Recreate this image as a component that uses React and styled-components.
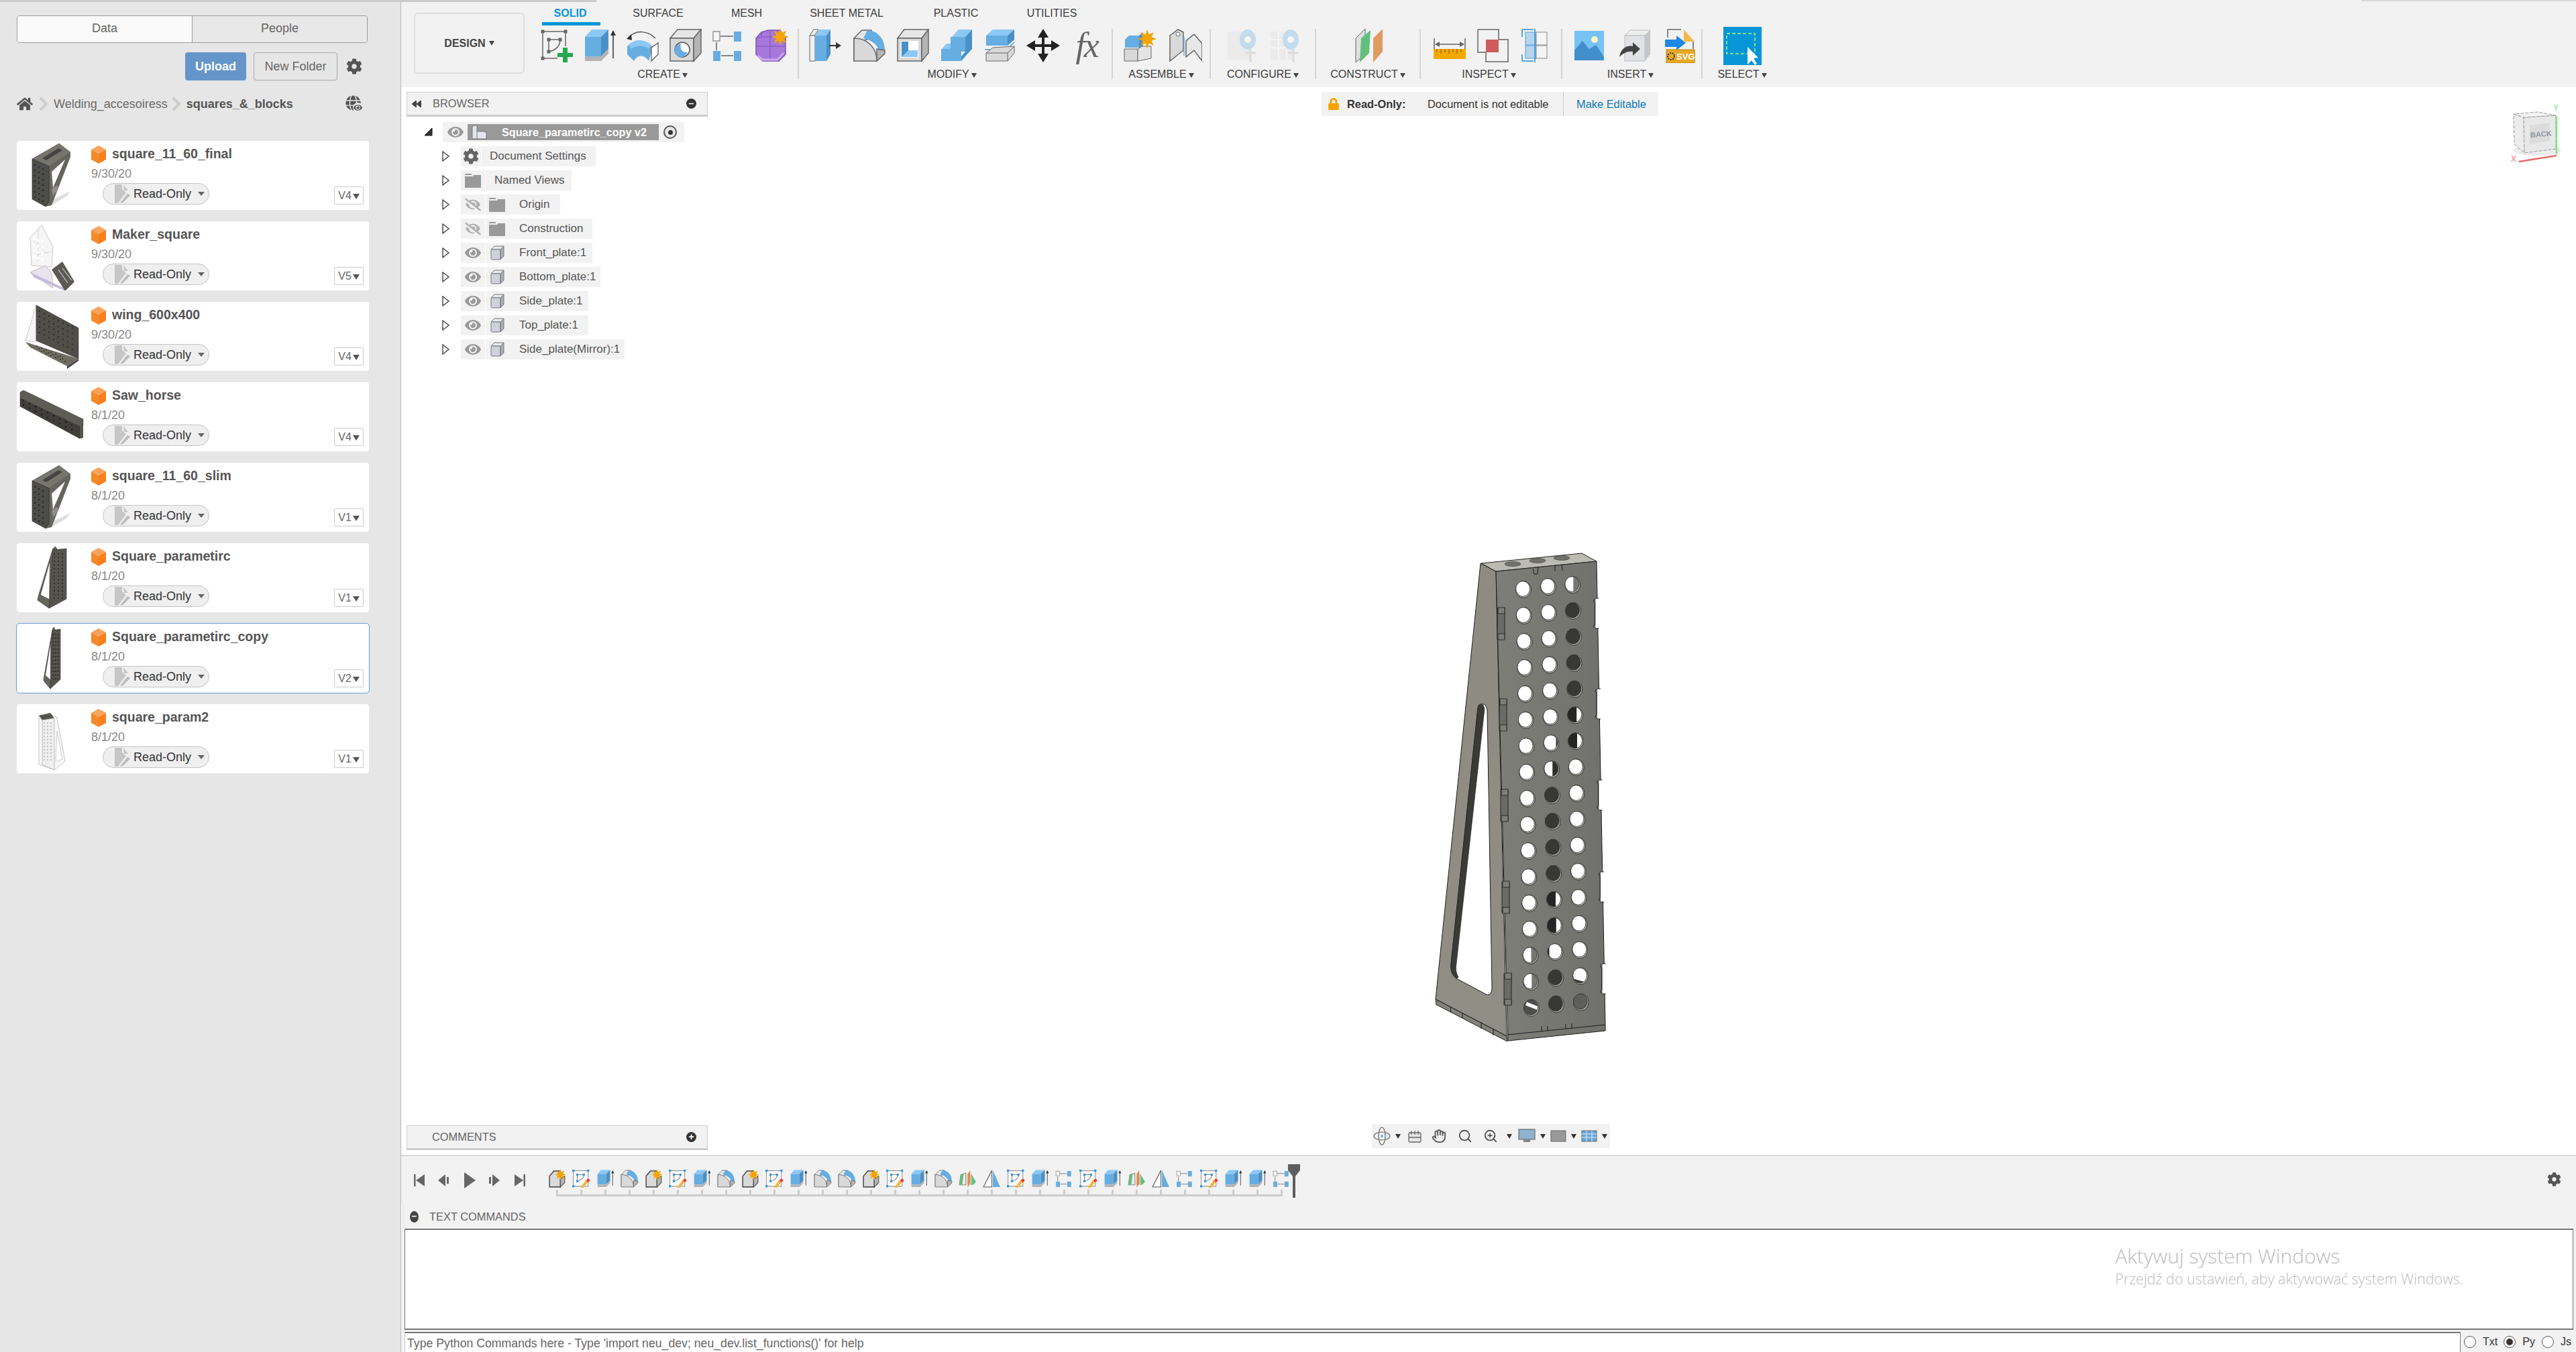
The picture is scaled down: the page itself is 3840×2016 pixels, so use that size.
import React from 'react';
import styled, { createGlobalStyle } from 'styled-components';
import { FaCog, FaHome, FaGlobe, FaEye, FaEyeSlash, FaLock, FaBackward } from 'react-icons/fa';
import { Hand, Search, ZoomIn } from 'lucide-react';

const Global = createGlobalStyle`
  html, body { margin: 0; padding: 0; background: #fff; }
  body { font-family: "Liberation Sans", Arial, sans-serif; font-size: 16px; color: #555; }
  * { box-sizing: border-box; }
`;

const Root = styled.div`position: relative; display: flex; width: 3840px; height: 2016px; overflow: hidden;`;
const TopStrip = styled.div`position: absolute; left: 0; top: 0; width: 889px; height: 3px; background: #cbcbcb; z-index: 3;`;
const TopStripRight = styled.div`position: absolute; right: 0; top: 0; width: 320px; height: 2px; background: #d8d8d8; z-index: 3;`;

/* ---------- Sidebar ---------- */
const Sidebar = styled.aside`
  width: 598px; flex: none; background: #e6e6e6; border-right: 1px solid #b9b9b9;
  padding: 23px 0 0 25px; display: flex; flex-direction: column;
`;
const Tabs = styled.div`display: flex; width: 523px; height: 41px; border: 1px solid #9c9c9c; border-radius: 4px; overflow: hidden;`;
const Tab = styled.div`
  flex: 1; display: flex; align-items: center; justify-content: center; font-size: 18px; color: #666; padding-bottom: 3px;
  background: ${p => (p.$on ? '#fafafa' : '#e8e8e8')};
  border-right: ${p => (p.$on ? '1px solid #9c9c9c' : 'none')};
`;
const Actions = styled.div`display: flex; align-items: center; width: 523px; height: 42px; margin-top: 14px; justify-content: flex-end;`;
const Upload = styled.div`
  width: 91px; height: 42px; border-radius: 4px; background: #6595c9; color: #fff; font-weight: 700; font-size: 18px;
  display: flex; align-items: center; justify-content: center;
`;
const NewFolder = styled.div`
  width: 125px; height: 42px; margin-left: 11px; border: 1px solid #a8a8a8; border-radius: 4px; color: #666; font-size: 18px;
  display: flex; align-items: center; justify-content: center;
`;
const GearWrap = styled.div`width: 45px; display: flex; justify-content: flex-end; padding-right: 8px; color: #555; font-size: 24px; line-height: 0;`;
const Crumbs = styled.div`position: relative; display: flex; align-items: center; height: 30px; margin-top: 20px; font-size: 18px; color: #666;`;
const Crumb = styled.span`font-weight: ${p => (p.$b ? 700 : 400)}; color: ${p => (p.$b ? '#555' : '#6b6b6b')};`;
const Chevron = styled.svg`margin: 0 8px 0 ${p => p.$l || 9}px; flex: none;`;
const HomeWrap = styled.span`color: #555; line-height: 0; font-size: 24px;`;
const GlobeWrap = styled.span`position: relative; width: 24px; height: 26px; margin-left: auto; margin-right: 58px; color: #555; font-size: 23px; line-height: 0;`;
const GlobeEye = styled.span`position: absolute; right: -2px; bottom: 0; color: #555; font-size: 13px; background: #e6e6e6; border-radius: 50%; padding: 1px;`;
const Cards = styled.div`display: flex; flex-direction: column; gap: 17px; margin-top: 40px;`;
const Card = styled.div`
  position: relative; width: 525px; height: 103px; background: #fff; border-radius: 4px; display: flex;
  outline: ${p => (p.$sel ? '1px solid #6b9bd2' : 'none')};
`;
const ThumbBox = styled.div`width: 111px; flex: none; line-height: 0;`;
const CardBody = styled.div`flex: 1; display: flex; flex-direction: column; padding: 8px 8px 9px 0;`;
const TitleRow = styled.div`display: flex; align-items: center; height: 24px; gap: 9px;`;
const Title = styled.div`font-weight: 700; font-size: 19.5px; color: #555; white-space: nowrap; margin-bottom: 1px;`;
const DateText = styled.div`font-size: 18px; color: #8a8a8a; height: 30px; line-height: 30px; margin-top: 2px;`;
const CardFoot = styled.div`display: flex; justify-content: space-between; align-items: flex-end; flex: 1;`;
const Pill = styled.div`
  margin-left: 17px; width: 159px; height: 32px; border: 1px solid #c4c4c4; border-radius: 16px; background: #efefef;
  display: flex; align-items: center; padding-left: 17px; color: #333; font-size: 18px; margin-top: -1px;
`;
const PillText = styled.span`margin-left: 2px;`;
const PillCaret = styled.span`margin-left: 10px; width: 0; height: 0; border: 5px solid transparent; border-top: 6px solid #666; border-bottom: 0;`;
const Version = styled.div`
  width: 44px; height: 27px; border: 1px solid #ccc; border-radius: 2px; margin-bottom: 0; color: #666; font-size: 16px;
  display: flex; align-items: center; justify-content: center; gap: 2px; background: #fff;
`;
const VerCaret = styled.span`width: 0; height: 0; border: 5px solid transparent; border-top: 8px solid #555; border-bottom: 0; margin-top: 2px;`;

/* ---------- Main ---------- */
const Main = styled.main`flex: 1; min-width: 0; display: flex; flex-direction: column;`;
const Toolbar = styled.div`height: 130px; flex: none; background: #f2f2f2; display: flex; padding-left: 19px; padding-top: 19px;`;
const DesignBtn = styled.div`
  width: 165px; height: 91px; border: 2px solid #dedede; border-radius: 6px; display: flex; align-items: center; justify-content: center;
  font-size: 16px; font-weight: 700; color: #444; gap: 5px; flex: none;
`;
const Caret = styled.span`
  display: inline-block; width: 0; height: 0; border-left: 4px solid transparent; border-right: 4px solid transparent;
  border-top: 7px solid #444; margin-left: ${p => p.$m ?? 3}px;
`;
const RibbonCol = styled.div`display: flex; flex-direction: column; margin-left: 16px; margin-top: -19px;`;
const TabRow = styled.div`position: relative; height: 43px; width: 1000px; flex: none;`;
const TabLabel = styled.div`
  position: absolute; top: 11px; left: ${p => p.$x}px; transform: translateX(-50%); font-size: 16px; white-space: nowrap;
  color: ${p => (p.$on ? '#0696d7' : '#3c3c3c')}; font-weight: ${p => (p.$on ? 700 : 400)};
`;
const TabLine = styled.div`position: absolute; left: 10px; top: 33px; width: 87px; height: 5px; background: #0696d7;`;
const Ribbon = styled.div`display: flex; height: 75px;`;
const Group = styled.div`
  width: ${p => p.$w}px; flex: none; display: flex; flex-direction: column; border-right: ${p => (p.$last ? 'none' : '2px solid #d4d4d4')};
`;
const IconRow = styled.div`display: flex; height: 50px; padding-left: ${p => p.$pl || 0}px; align-items: center;`;
const IconCell = styled.div`width: ${p => p.$c}px; display: flex; justify-content: center; align-items: center; flex: none; opacity: ${p => (p.$dim ? 0.3 : 1)};`;
const GroupLabel = styled.div`
  margin-top: 9px; height: 18px; line-height: 18px; text-align: center; font-size: 16px; color: #3c3c3c; white-space: nowrap;
  padding-right: ${p => p.$pr || 0}px;
`;

const Viewport = styled.div`position: relative; flex: 1; background: #fff;`;
const Overlay = styled.div`position: absolute; left: ${p => p.$l}px; top: ${p => p.$t}px;`;
const Panel = styled.div`
  width: 449px; height: 37px; background: #f2f2f2; border: 1px solid #d0d0d0; border-bottom: 3px solid #ccc;
  display: flex; align-items: center; font-size: 16.4px; color: #666; padding-left: ${p => p.$pl || 7}px; padding-right: 16px;
`;
const PanelTitle = styled.span`margin-left: ${p => p.$m || 0}px;`;
const RoundBtn = styled.span`
  margin-left: auto; width: 15px; height: 15px; border-radius: 50%; background: #333; color: #fff; font-size: 14px; font-weight: 700;
  line-height: 14px; text-align: center; flex: none;
`;
const RoundBtnLeft = styled(RoundBtn)`margin-left: 0; background: #444; width: 13px; height: 17px;`;
const Tree = styled.div`display: flex; flex-direction: column; gap: 6px; margin-top: 8px;`;
const TreeRow = styled.div`display: flex; align-items: center; height: 30px; margin-left: ${p => p.$ml ?? 53}px;`;
const ArrowCell = styled.span`width: ${p => p.$w || 28}px; flex: none; line-height: 0; display: flex;`;
const RowPill = styled.div`display: flex; align-items: center; height: 30px; width: ${p => p.$w}px; background: #f2f2f2; font-size: 17px; color: #555; white-space: nowrap;`;
const RowIcon = styled.span`
  width: ${p => p.$w}px; height: 30px; flex: none; display: flex; align-items: center; justify-content: center; line-height: 0;
  border-right: ${p => (p.$sep ? '1px solid #fff' : 'none')}; color: ${p => (p.$c || '#999')}; font-size: 24px;
`;
const RowLabel = styled.span`margin-left: ${p => p.$m}px;`;
const RootHL = styled.div`
  display: flex; align-items: center; width: 285px; height: 24px; background: #999; color: #fff; font-weight: 700; font-size: 16.2px; padding-left: 5px;
`;
const RootLabel = styled.span`margin-left: 22px; white-space: nowrap;`;
const RootRadio = styled.span`
  width: 20px; height: 20px; border-radius: 50%; border: 2px solid #555; background: #e8e8e8; margin-left: 7px; display: flex; align-items: center; justify-content: center;
  &::after { content: ''; width: 7px; height: 7px; border-radius: 50%; background: #333; }
`;
const Banner = styled.div`
  position: absolute; left: 1372px; top: 7px; width: 502px; height: 36px; background: #f2f2f2; display: flex; align-items: center;
  font-size: 16.4px; color: #333; padding-left: 9px;
`;
const BannerLock = styled.span`color: #f5a300; font-size: 18px; line-height: 0; width: 29px;`;
const BannerB = styled.b`width: 120px; font-size: 16.4px;`;
const BannerT = styled.span`width: 202px; white-space: nowrap;`;
const BannerLink = styled.span`border-left: 1px solid #ccc; height: 36px; line-height: 36px; padding-left: 19px; color: #0a78bd;`;
const CubeBox = styled.div`position: absolute; right: 20px; top: 20px; line-height: 0;`;
const ModelBox = styled.div`position: absolute; left: 1532px; top: 685px; line-height: 0;`;
const NavBar = styled.div`
  position: absolute; left: 1447px; top: 1546px; width: 355px; height: 36px; background: #f2f2f2; display: flex; align-items: center; padding-left: 0;
`;
const NavItem = styled.span`width: ${p => p.$w}px; flex: none; display: flex; justify-content: center; align-items: center; color: #555; line-height: 0;`;
const NavCaret = styled.span`width: ${p => p.$w || 16}px; flex: none; display: flex; justify-content: center;
  &::after { content: ''; width: 0; height: 0; border-left: 4px solid transparent; border-right: 4px solid transparent; border-top: 7px solid #333; }
`;

/* ---------- Timeline ---------- */
const Timeline = styled.div`
  position: relative; height: 74px; flex: none; background: #f2f2f2; border-top: 2px solid #dcdcdc; display: flex; padding-top: 20px;
`;
const Controls = styled.div`display: flex; width: 214px; padding-left: 8px; height: 32px; align-items: center; flex: none;`;
const Ctrl = styled.span`width: 37.5px; display: flex; justify-content: center; line-height: 0;`;
const Track = styled.div`
  position: relative; display: flex; height: 40px;
  &::after { content: ''; position: absolute; left: 17px; right: 17px; bottom: 0; height: 3px; background: #ccc; }
`;
const Step = styled.div`width: 36.03px; display: flex; flex-direction: column; align-items: center; flex: none; line-height: 0;`;
const Tick = styled.span`width: 3px; height: 9px; background: #ccc; margin-top: 3px;`;
const Playhead = styled.div`position: absolute; left: 1322px; top: 12px; line-height: 0;`;
const TLGear = styled.div`position: absolute; right: 22px; top: 24px; color: #555; font-size: 21px; line-height: 0;`;
const CmdHead = styled.div`
  height: 36px; flex: none; background: #f2f2f2; display: flex; align-items: center; padding-left: 10px; font-size: 16.4px; color: #666;
  border-left: 1px solid #ddd; margin-left: 2px; gap: 16px;
`;
const ConsoleWrap = styled.div`background: #f2f2f2; flex: none; height: 154px;`;
const Console = styled.div`
  position: relative; height: 151px; margin-left: 5px; margin-right: 4px; background: #fff; border: 1px solid #777; border-width: 2px 1px;
`;
const Watermark = styled.div`
  position: absolute; left: 2549px; top: ${p => p.$t}px; font-family: "Open Sans", "Noto Sans", sans-serif; font-weight: 300; white-space: nowrap;
  font-size: ${p => p.$s}px; color: #bcbcbc;
`;
const InputRow = styled.div`height: 30px; flex: none; display: flex; background: #f2f2f2;`;
const PyInput = styled.div`
  margin-left: 5px; width: 3065px; background: #fff; border-top: 2px solid #777; border-left: 1px solid #ccc; border-right: 1px solid #777;
  font-size: 17.7px; color: #666; padding: 5px 0 0 3px; white-space: nowrap;
`;
const Radios = styled.div`display: flex; align-items: center; flex: 1; padding-left: 2px; font-size: 16px; color: #333;`;
const Radio = styled.span`
  width: 18px; height: 18px; border-radius: 50%; border: 1px solid #555; background: #fff; flex: none; margin-left: ${p => p.$m || 0}px;
  display: flex; align-items: center; justify-content: center;
  &::after { content: ''; width: 10px; height: 10px; border-radius: 50%; background: ${p => (p.$on ? '#333' : 'transparent')}; }
`;
const RadioText = styled.span`margin-left: 10px;`;

/* ---------- Icons ---------- */
const BL = '#66ade2', BD = '#4a90c8', BT = '#8cc8f5', GR = '#d9d9d9', GD = '#b4b4b4', ST = '#666';
const I = ({ s = 50, children }) => <svg width={s} height={s} viewBox="0 0 50 50">{children}</svg>;
const Star = ({ x, y, r = 11, c = '#f5a300' }) => {
  const pts = [];
  for (let i = 0; i < 16; i++) {
    const a = (i * Math.PI) / 8, q = i % 2 ? r * 0.5 : r;
    pts.push(`${x + q * Math.sin(a)},${y - q * Math.cos(a)}`);
  }
  return <polygon points={pts.join(' ')} fill={c} />;
};
const Handles = ({ pts, c = '#666', r = 2.5 }) => pts.map(([x, y], i) => <rect key={i} x={x - r} y={y - r} width={r * 2} height={r * 2} fill={c} />);

const ISketch = ({ s }) => (
  <I s={s}>
    <path d="M4 4H38M4 4V44M4 44H26M38 4V26" stroke={ST} strokeWidth="1.5" fill="none" />
    <path d="M13 16H30M13 16V34M30 16C30 25 24 32 13 34" stroke={ST} strokeWidth="1.5" fill="none" />
    <Handles pts={[[4, 4], [38, 4], [4, 44], [13, 16], [30, 16], [13, 34]]} />
    <path d="M34 28h7v8h8v6h-8v8h-7v-8h-8v-6h8z" fill="#22a94a" />
  </I>
);
const IExtrude = ({ s }) => (
  <I s={s}>
    <polygon points="3,12 13,1 38,1 27,12" fill={BT} />
    <rect x="3" y="12" width="24" height="29" fill={BL} />
    <polygon points="27,12 38,1 38,30 27,41" fill={BD} />
    <polygon points="3,41 27,41 38,30 38,37 27,48 3,48" fill={GD} />
    <path d="M45 44V8" stroke="#333" strokeWidth="1.5" />
    <polygon points="41,10 45,2 49,10" fill="#333" />
  </I>
);
const IRevolve = () => (
  <I>
    <path d="M3 14C14 1 32 2 44 14" stroke="#555" strokeWidth="1.5" fill="none" />
    <polygon points="1,15 8,8 9,17" fill="#333" />
    <path d="M2 26L2 38L12 48C17 38 28 38 34 48L40 28C30 14 12 14 2 26Z" fill={BL} />
    <path d="M4 24C14 15 28 15 38 24L34 30C26 24 16 24 8 30Z" fill={BT} />
    <polygon points="38,28 48,21 48,38 38,48" fill="#fff" stroke="#555" strokeWidth="1.2" />
  </I>
);
const IHole = () => (
  <I>
    <polygon points="2,14 13,1 48,1 37,14" fill="#e6e6e6" stroke={ST} strokeWidth="1.5" />
    <rect x="2" y="14" width="35" height="34" fill={GR} stroke={ST} strokeWidth="1.5" />
    <polygon points="37,14 48,1 48,36 37,48" fill={GD} stroke={ST} strokeWidth="1.5" />
    <circle cx="20" cy="31" r="11" fill="#fff" stroke="#555" strokeWidth="1.5" />
    <path d="M18 22A10 10 0 1 0 28 35C20 36 16 30 18 22Z" fill={BL} />
  </I>
);
const IPattern = ({ s }) => (
  <I s={s}>
    <rect x="2" y="4" width="10" height="14" fill="#f5f5f5" stroke={ST} />
    <rect x="33" y="4" width="11" height="15" fill={BL} />
    <rect x="2" y="33" width="11" height="15" fill={BL} />
    <rect x="33" y="33" width="11" height="15" fill={BL} />
    <path d="M13 11H32M7 20V32M14 40H32" stroke={ST} strokeWidth="1.5" />
  </I>
);
const INewComp = () => (
  <I>
    <path d="M10 5L20 2H38L46 14V38L36 48H12L2 38V14Z" fill="#a877dc" stroke="#7f52ba" strokeWidth="1.5" />
    <path d="M2 26H46M23 4V48M10 5V12L2 14M10 12H38" stroke="#7f52ba" strokeWidth="1" fill="none" />
    <path d="M4 40L12 46H34L43 36" stroke="#c9a9ea" strokeWidth="3" fill="none" />
    <Star x={38} y={12} r={13} />
  </I>
);
const IPress = () => (
  <I>
    <polygon points="1,10 7,1 14,1 8,10" fill="#eee" stroke={ST} />
    <rect x="1" y="10" width="8" height="38" fill="#f0f0f0" stroke={ST} />
    <polygon points="9,10 15,1 32,1 26,10" fill={BT} />
    <rect x="9" y="10" width="17" height="38" fill={BL} />
    <polygon points="26,10 32,1 32,38 26,48" fill={BD} />
    <path d="M30 25H42" stroke="#333" strokeWidth="2" />
    <polygon points="40,20 48,25 40,30" fill="#333" />
  </I>
);
const IFillet = ({ s }) => (
  <I s={s}>
    <path d="M2 48V14L14 2H28C28 14 20 22 2 14" fill="#e6e6e6" stroke={ST} strokeWidth="1.5" />
    <path d="M2 14C22 14 36 28 36 48H2Z" fill={GR} stroke={ST} strokeWidth="1.5" />
    <path d="M22 2C36 2 48 14 48 32L40 36C38 24 30 18 16 14Z" fill={BL} />
    <path d="M36 30L48 32V37L36 48Z" fill={GD} stroke={ST} strokeWidth="1.5" />
  </I>
);
const IShell = () => (
  <I>
    <polygon points="2,14 12,1 48,1 38,14" fill="#e6e6e6" stroke={ST} strokeWidth="1.5" />
    <rect x="2" y="14" width="36" height="34" fill={GR} stroke={ST} strokeWidth="1.5" />
    <polygon points="38,14 48,1 48,36 38,48" fill={GD} stroke={ST} strokeWidth="1.5" />
    <rect x="7" y="18" width="26" height="25" fill="#fff" />
    <rect x="8" y="19" width="10" height="23" fill={BD} />
    <polygon points="18,32 32,32 32,42 8,42" fill={BT} />
  </I>
);
const ICombine = () => (
  <I>
    <polygon points="18,12 28,1 48,1 38,12" fill={BT} />
    <rect x="16" y="12" width="22" height="22" fill={BL} />
    <polygon points="38,12 48,1 48,30 38,41" fill={BD} />
    <polygon points="3,30 10,22 16,22 16,30" fill={BT} />
    <rect x="2" y="30" width="30" height="18" fill={BL} />
    <polygon points="32,41 38,34 38,41 32,48" fill={BD} />
  </I>
);
const IOffset = () => (
  <I>
    <polygon points="4,10 14,1 46,1 36,10" fill={BT} />
    <rect x="4" y="10" width="32" height="15" fill={BL} />
    <polygon points="36,10 46,1 46,16 36,25" fill={BD} />
    <path d="M2 31H34L46 20" stroke="#fff" strokeWidth="4" fill="none" />
    <path d="M2 31H34L46 20" stroke={BL} strokeWidth="2" fill="none" />
    <polygon points="4,36 14,28 46,26 46,36 36,48 4,48" fill={GR} stroke={ST} />
    <path d="M4 36H36V48M36 36L46 26" stroke={ST} fill="none" />
  </I>
);
const IMove = () => (
  <I>
    <path d="M25 5V45M5 25H45" stroke="#222" strokeWidth="4" />
    <polygon points="25,0 33,13 17,13" fill="#222" />
    <polygon points="25,50 33,37 17,37" fill="#222" />
    <polygon points="0,25 13,17 13,33" fill="#222" />
    <polygon points="50,25 37,17 37,33" fill="#222" />
  </I>
);
const FxText = styled.span`font-family: "Liberation Serif", serif; font-style: italic; font-size: 52px; color: #666; line-height: 50px; letter-spacing: -2px;`;
const IAssemble = () => (
  <I>
    <polygon points="3,16 9,10 24,10 24,28 3,28" fill={BL} />
    <polygon points="24,10 30,5 30,25 24,30" fill={BD} />
    <polygon points="2,30 22,30 22,48 2,48" fill={GR} stroke={ST} />
    <polygon points="22,30 28,26 42,26 42,44 22,48" fill="#e4e4e4" stroke={ST} />
    <Star x={36} y={15} r={14} />
  </I>
);
const IJoint = () => (
  <I>
    <path d="M2 44V10L14 1L22 5V32L2 48Z" fill={GR} stroke={ST} strokeWidth="1.5" />
    <path d="M26 18L38 8L50 22V48L38 32L26 42Z" fill="#e8e8e8" stroke={ST} strokeWidth="1.5" />
    <circle cx="14" cy="8" r="3" fill="#fff" stroke={ST} />
    <path d="M23 12V40" stroke={BL} strokeWidth="1.5" />
  </I>
);
const IConfig = ({ table }) => (
  <I>
    <rect x="4" y="4" width="34" height="42" fill="#ddd" />
    {table && <path d="M4 16H38M4 28H38M16 4V46M28 4V46" stroke="#fff" strokeWidth="2" />}
    <ellipse cx="34" cy="16" rx="12" ry="15" fill="#5aa9dc" />
    <circle cx="34" cy="16" r="5" fill="#fff" />
    <path d="M30 36H46M38 30V50" stroke="#aaa" strokeWidth="3" />
  </I>
);
const IPlane = () => (
  <I>
    <polygon points="2,14 16,0 16,38 2,50" fill="#e0e0e0" stroke={ST} />
    <polygon points="8,50 22,36 24,2 10,14" fill="#60bf7d" />
    <polygon points="28,50 42,34 42,0 28,14" fill="#e29a63" />
  </I>
);
const IMeasure = () => (
  <I>
    <path d="M2 14V32M48 14V32M4 23H46" stroke="#666" strokeWidth="1.5" />
    <polygon points="3,23 10,19 10,27" fill="#666" />
    <polygon points="47,23 40,19 40,27" fill="#666" />
    <rect x="1" y="30" width="48" height="15" fill="#f5a800" />
    <path d="M6 30v5M12 30v7M18 30v5M24 30v7M30 30v5M36 30v7M42 30v5" stroke="#a56e00" strokeWidth="1.5" />
  </I>
);
const IInterf = () => (
  <I>
    <path d="M2 1H33V16M2 1V35H14" fill="none" stroke={ST} strokeWidth="1.5" />
    <path d="M33 16H47V49H14V35" fill="none" stroke={ST} strokeWidth="1.5" />
    <rect x="14" y="16" width="19" height="19" fill="#cf5c5c" />
  </I>
);
const ISection = () => (
  <I>
    <path d="M3 1H20M3 48H20M3 1V12M3 38V48" stroke="#2b8fd8" strokeWidth="1.5" fill="none" />
    <rect x="8" y="5" width="16" height="19" fill="#b5d4ee" stroke="#5a9fd4" />
    <rect x="8" y="25" width="16" height="19" fill="#b5d4ee" stroke="#5a9fd4" />
    <rect x="24" y="5" width="16" height="19" fill="#f5f5f5" stroke="#888" />
    <rect x="24" y="25" width="16" height="19" fill="#f5f5f5" stroke="#888" />
    <path d="M22 0V50" stroke="#2b8fd8" strokeWidth="1.5" />
  </I>
);
const ICanvas = () => (
  <I>
    <rect x="2" y="3" width="44" height="44" fill="#78c1f5" />
    <circle cx="32" cy="16" r="5" fill="#fdf7c3" />
    <path d="M2 47V32L14 18L24 30L34 24L46 42V47Z" fill="#418fcb" />
  </I>
);
const IDerive = () => (
  <I>
    <polygon points="10,10 18,2 48,2 40,10" fill="#eee" stroke="#bbb" />
    <rect x="10" y="10" width="30" height="38" fill="#e0e2e6" stroke="#bbb" />
    <polygon points="40,10 48,2 48,38 40,48" fill="#c4c6ca" />
    <path d="M2 42C4 30 12 24 22 26V20L33 30L22 40V34C14 33 8 36 2 42Z" fill="#444" />
  </I>
);
const ISvgFile = () => (
  <svg width="50" height="52" viewBox="0 0 50 52">
    <path d="M6 2H26M6 2V14M44 18V31" stroke={ST} strokeWidth="1.5" fill="none" />
    <polygon points="30,2 46,20 30,20" fill="#f3b94d" />
    <rect x="2" y="17" width="18" height="11" fill="#1e88e5" />
    <polygon points="19,11 33,22 19,33" fill="#1e88e5" />
    <rect x="4" y="32" width="42" height="20" fill="#e9a824" stroke="#b57f0f" />
    <text x="19" y="47" fontSize="13" fontWeight="700" fontFamily="Liberation Sans" fill="#fff">SVG</text>
    <circle cx="11" cy="42" r="5" fill="none" stroke="#333" strokeWidth="2" strokeDasharray="2 1.5" />
  </svg>
);
const ISelect = () => (
  <svg width="57" height="57" viewBox="0 0 57 57">
    <rect width="57" height="57" fill="#0696d7" />
    <rect x="5" y="10" width="42" height="30" fill="none" stroke="#7fe08a" strokeWidth="2" strokeDasharray="5 3" />
    <polygon points="36,30 36,56 42,50 47,57 50,55 45,47 52,46" fill="#fff" />
  </svg>
);
/* timeline only */
const TNew = () => (
  <I s={27}>
    <path d="M4 48V18L16 4H34V48Z" fill={GR} stroke="#555" strokeWidth="3" />
    <path d="M34 48L46 36V18L34 26Z" fill={GD} stroke="#555" strokeWidth="2" />
    <Star x={34} y={14} r={15} />
  </I>
);
const TSketch = () => (
  <I s={27}>
    <path d="M3 3H44V46H3Z" fill="#fbfbfb" stroke="#999" strokeWidth="2" />
    <path d="M14 14H32M14 14V30M32 14C32 24 24 30 14 32" stroke="#888" strokeWidth="2" fill="none" />
    <Handles c="#2f96e8" r={3} pts={[[3, 3], [44, 3], [3, 46], [14, 14], [32, 14], [14, 32]]} />
    <polygon points="24,48 38,28 45,33 31,50 23,50" fill="#f5b642" />
    <circle cx="44" cy="30" r="4.5" fill="#ee3b3b" />
  </I>
);
const TPlane = () => (
  <I s={27}>
    <polygon points="6,14 20,10 20,42 2,42" fill="#eee" stroke="#888" strokeWidth="2" />
    <polygon points="6,14 14,10 10,42 2,42" fill="#60bf7d" />
    <polygon points="34,10 48,34 40,42 26,42" fill="#60bf7d" />
    <polygon points="20,14 36,12 36,42 22,42" fill="#e9d6c8" opacity=".8" />
    <polygon points="25,50 25,12 32,2 32,38" fill="#e08a4f" />
  </I>
);
const TTri = () => (
  <I s={27}>
    <polygon points="25,2 25,48 2,48" fill="#fff" stroke="#777" strokeWidth="2.5" />
    <polygon points="28,2 48,48 28,48" fill={BL} />
  </I>
);

const seq = 'n s e f n s e f n s e f f n s e f p t s e a s e p t a s e e a'.split(' ');
const tlMap = { n: TNew, s: TSketch, e: () => <IExtrude s={27} />, f: () => <IFillet s={27} />, p: TPlane, t: TTri, a: () => <IPattern s={27} /> };

/* ---------- small tree icons ---------- */
const Folder = () => (
  <svg width="24" height="21" viewBox="0 0 24 21"><path d="M0 0H10V2H0ZM0 4H12L13 2H24V21H0Z" fill="#999" /></svg>
);
const MiniCube = () => (
  <svg width="21" height="22" viewBox="0 0 21 22">
    <polygon points="1,6 6,1 20,1 15,6" fill="#e8eaee" stroke="#777" />
    <rect x="1" y="6" width="14" height="15" rx="1.5" fill="#cfd2d8" stroke="#777" />
    <polygon points="15,6 20,1 20,16 15,21" fill="#a9adb5" stroke="#777" />
  </svg>
);
const OpenArrow = () => (
  <svg width="12" height="16" viewBox="0 0 12 16"><path d="M1 1L10 8L1 15Z" fill="#fff" stroke="#444" strokeWidth="1.4" /></svg>
);
const DownArrow = () => (
  <svg width="12" height="12" viewBox="0 0 12 12"><polygon points="0,11 11,0 11,11" fill="#333" stroke="#111" /></svg>
);
const Comp = () => (
  <svg width="24" height="22" viewBox="0 0 24 22">
    <path d="M2 21V3L5 1H9V10H20L23 12V21Z" fill="#e3e6ec" stroke="#777" />
    <path d="M9 10V21" stroke="#777" />
  </svg>
);

/* ---------- sidebar bits ---------- */
const OrangeCube = () => (
  <svg width="22" height="27" viewBox="0 0 22 27" style={{ flex: 'none' }}>
    <polygon points="11,0 22,6 11,12 0,6" fill="#f9a35b" />
    <polygon points="0,6 11,12 11,27 0,21" fill="#f58a2c" />
    <polygon points="22,6 11,12 11,27 22,21" fill="#fb7f1c" />
  </svg>
);
const DocPencil = () => (
  <svg width="26" height="28" viewBox="0 0 26 28">
    <path d="M0 0H11V7L17 12L5 28H0Z" fill="#c6c6c6" />
    <path d="M13 0L20 9L14 9Z" fill="#c6c6c6" />
    <path d="M7 28L19 13L24 16L12 28Z" fill="#bdbdbd" stroke="#f5f5f5" />
  </svg>
);
const seqDots = (x0, y0, dx1, dy1, dx2, dy2, n1, n2, r, c) => {
  const out = [];
  for (let i = 0; i < n1; i++) for (let j = 0; j < n2; j++) {
    out.push(<circle key={`${i}-${j}`} cx={x0 + dx1 * i + dx2 * j} cy={y0 + dy1 * i + dy2 * j} r={r} fill={c} />);
  }
  return out;
};
const TS = ({ children }) => <svg width="111" height="103" viewBox="0 0 111 103">{children}</svg>;
const ThumbSquare = () => (
  <TS>
    <polygon points="48,90 80,75 74,83 52,96" fill="#dedede" />
    <polygon points="48,38 80,17 80,24 52,96 43,98" fill="#66655e" />
    <polygon points="52,46 72,28 54,70" fill="#fff" />
    <polygon points="52,72 60,66 62,72 54,82" fill="#8f8e88" />
    <polygon points="23,27 63,4 80,17 48,38" fill="#77766e" stroke="#333" strokeWidth=".5" />
    <polygon points="38,26 62,11 68,14 44,29" fill="#444" />
    <polygon points="23,27 48,38 48,90 43,98 23,87" fill="#4d4d49" stroke="#2a2a2a" strokeWidth=".7" />
    {seqDots(27, 36, 0, 8, 6, 3, 7, 3, 1.2, '#242424')}
  </TS>
);
const ThumbMaker = () => (
  <TS>
    <polygon points="20,24 37,6 54,38 52,68 22,66" fill="#f6f6f6" stroke="#c8c8c8" />
    <path d="M32 10V60M25 30L48 50M30 50L52 45" stroke="#d8d8d8" fill="none" />
    {seqDots(26, 26, 0, 9, 6, 2, 4, 3, 2, '#fff')}
    <polygon points="20,76 43,66 52,78 54,100 40,90" fill="#e8e4ee" stroke="#bbb" />
    <polygon points="20,76 72,100 72,104 26,84" fill="#c5bcd8" />
    <polygon points="52,72 68,60 86,90 72,104" fill="#5a5953" />
    <path d="M62 72L76 92M68 70L82 88" stroke="#ccc" strokeWidth="1.2" />
  </TS>
);
const ThumbWing = () => (
  <TS>
    <polygon points="29,5 13,58 28,60" fill="#f4f4f4" stroke="#ccc" />
    <polygon points="13,60 92,85 75,96 20,68" fill="#6f6d63" />
    <polygon points="29,5 92,39 92,85 29,58" fill="#4f4e49" stroke="#2c2c2c" strokeWidth=".5" />
    {seqDots(34, 14, 7, 3.6, 0, 8, 8, 5, 1, '#222')}
    <polygon points="75,96 92,85 92,88 75,100" fill="#444" />
    {seqDots(30, 66, 7, 3, 3.5, 4, 6, 3, 1, '#2f2f2b')}
  </TS>
);
const ThumbSaw = () => (
  <TS>
    <polygon points="5,15 10,12 99,55 99,64 94,66 5,24" fill="#5d5c55" stroke="#2c2c2c" strokeWidth=".5" />
    <polygon points="5,24 94,66 94,84 5,36" fill="#3f3e3a" stroke="#222" strokeWidth=".5" />
    <polygon points="94,66 99,62 99,83 94,84" fill="#55544f" />
    {seqDots(10, 27, 9, 4.6, 0, 7, 9, 2, 1.2, '#1c1c1c')}
  </TS>
);
const ThumbBracket = ({ x0, w }) => {
  const x = v => x0 + v * w;
  return (
    <TS>
      <polygon points={`${x(0.53)},8 ${x(0.62)},5 ${x(0.72)},12 ${x(0.4)},97 ${x(0)},85 ${x(0.02)},80`} fill="#66655d" stroke="#2b2b2b" strokeWidth=".6" />
      <polygon points={`${x(0.53)},10 ${x(1)},8 ${x(1)},83 ${x(0.4)},97`} fill="#55544e" stroke="#2b2b2b" strokeWidth=".6" />
      <polygon points={`${x(0.43)},26 ${x(0.41)},84 ${x(0.1)},77`} fill="#fff" stroke="#2b2b2b" strokeWidth=".6" />
      {seqDots(x(0.58), 16, 0, 5.5, w * 0.14, 0, 13, 3, 1, '#222')}
    </TS>
  );
};
const ThumbLight = () => (
  <TS>
    <polygon points="50,15 60,20 72,85 56,98 33,90 33,17" fill="#f8f8f8" stroke="#c4c4c4" />
    <polygon points="60,40 68,82 58,86" fill="#fff" stroke="#cfcfcf" />
    <polygon points="33,17 50,13 56,21 38,24" fill="#55554f" />
    <polygon points="38,24 56,21 56,98 38,90" fill="#f0f0f0" stroke="#bdbdbd" />
    {seqDots(41, 28, 0, 5, 5, 0, 12, 3, 1.2, '#c2c2c2')}
  </TS>
);

const files = [
  { n: 'square_11_60_final', d: '9/30/20', v: 'V4', t: <ThumbSquare /> },
  { n: 'Maker_square', d: '9/30/20', v: 'V5', t: <ThumbMaker /> },
  { n: 'wing_600x400', d: '9/30/20', v: 'V4', t: <ThumbWing /> },
  { n: 'Saw_horse', d: '8/1/20', v: 'V4', t: <ThumbSaw /> },
  { n: 'square_11_60_slim', d: '8/1/20', v: 'V1', t: <ThumbSquare /> },
  { n: 'Square_parametirc', d: '8/1/20', v: 'V1', t: <ThumbBracket x0={31} w={43} /> },
  { n: 'Square_parametirc_copy', d: '8/1/20', v: 'V2', sel: true, t: <ThumbBracket x0={40} w={25} /> },
  { n: 'square_param2', d: '8/1/20', v: 'V1', t: <ThumbLight /> },
];

const tree = [
  { l: 'Document Settings', w: 201, icon: 'gear' },
  { l: 'Named Views', w: 165, icon: 'folder' },
  { l: 'Origin', w: 148, eye: 'off', icon: 'folder2' },
  { l: 'Construction', w: 196, eye: 'off', icon: 'folder2' },
  { l: 'Front_plate:1', w: 196, eye: 'on', icon: 'cube' },
  { l: 'Bottom_plate:1', w: 208, eye: 'on', icon: 'cube' },
  { l: 'Side_plate:1', w: 190, eye: 'on', icon: 'cube' },
  { l: 'Top_plate:1', w: 190, eye: 'on', icon: 'cube' },
  { l: 'Side_plate(Mirror):1', w: 244, eye: 'on', icon: 'cube' },
];

const TreeItem = ({ r }) => (
  <TreeRow>
    <ArrowCell><OpenArrow /></ArrowCell>
    <RowPill $w={r.w}>
      {r.icon === 'gear' && <><RowIcon $w={31} $sep $c="#666"><FaCog /></RowIcon><RowLabel $m={12}>{r.l}</RowLabel></>}
      {r.icon === 'folder' && <><RowIcon $w={37} $sep><Folder /></RowIcon><RowLabel $m={13}>{r.l}</RowLabel></>}
      {r.eye && <RowIcon $w={37} $sep $c={r.eye === 'on' ? '#999' : '#b0b0b0'}>{r.eye === 'on' ? <FaEye /> : <FaEyeSlash />}</RowIcon>}
      {r.icon === 'folder2' && <><RowIcon $w={34}><Folder /></RowIcon><RowLabel $m={16}>{r.l}</RowLabel></>}
      {r.icon === 'cube' && <><RowIcon $w={34}><MiniCube /></RowIcon><RowLabel $m={16}>{r.l}</RowLabel></>}
    </RowPill>
  </TreeRow>
);

/* ---------- 3D model ---------- */
const OX = 2130, OY = 815;
const holeCols = [
  { x0: 2271, y0: 879, dx: 0.75, dy: 39, s: 'wwwwwwwwwwwwwwGGS' },
  { x0: 2308, y0: 875, dx: 0.75, dy: 38.9, s: 'wwwwwwrDKKKKLLlKK' },
  { x0: 2344.3, y0: 872, dx: 0.78, dy: 38.9, s: 'GKKKKLLwwwwwwwwbM' },
];
const Hole = ({ x, y, t, id }) => {
  const rx = 11.5, ry = 12.5;
  let inner = null;
  if (t === 'G') inner = <rect x={x + 1} y={y - 14} width={14} height={28} fill="#777772" />;
  if (t === 'D') inner = <rect x={x + 1} y={y - 14} width={14} height={28} fill="#2f2f2d" />;
  if (t === 'r') inner = <rect x={x + 7} y={y - 14} width={8} height={28} fill="#2f2f2d" />;
  if (t === 'K') inner = <rect x={x - 14} y={y - 14} width={28} height={28} fill="#383835" />;
  if (t === 'M') inner = <rect x={x - 14} y={y - 14} width={28} height={28} fill="#5e5e5a" />;
  if (t === 'L') inner = <rect x={x - 14} y={y - 14} width={16} height={28} fill="#252523" />;
  if (t === 'l') inner = <rect x={x - 14} y={y - 14} width={5} height={28} fill="#252523" />;
  if (t === 'b') inner = <polygon points={`${x - 14},${y + 3} ${x + 14},${y + 11} ${x + 14},${y + 14} ${x - 14},${y + 14}`} fill="#3a3a38" />;
  if (t === 'S') inner = <><rect x={x - 14} y={y - 14} width={28} height={28} fill="#4d4d4a" /><polygon points={`${x - 7},${y - 9} ${x + 10},${y - 2} ${x + 9},${y + 3} ${x - 9},${y - 4}`} fill="#fff" /></>;
  return (
    <g>
      <ellipse cx={x} cy={y} rx={rx} ry={ry} fill="#a9a9a2" stroke="#2a2a2a" strokeWidth=".9" />
      <clipPath id={id}><ellipse cx={x - 0.9} cy={y - 1} rx={rx - 1.1} ry={ry - 1.2} /></clipPath>
      <g clipPath={`url(#${id})`}>
        <rect x={x - 14} y={y - 14} width={28} height={28} fill="#fff" />
        {inner}
      </g>
      <ellipse cx={x - 0.9} cy={y - 1} rx={rx - 1.1} ry={ry - 1.2} fill="none" stroke="#1f1f1f" strokeWidth=".7" />
    </g>
  );
};
const leftTabs = [[2232, 907], [2235, 1043], [2237, 1178], [2239, 1315], [2242, 1452]];
const slotYs = [892, 1027, 1163, 1300, 1437];
const edgeX = y => 2380 + (y - 837) * 0.0188;
const Model = () => (
  <svg width="270" height="745" viewBox={`${OX} ${OY} 270 745`}>
    <defs>
      <linearGradient id="side" x1="0" y1="0" x2="0" y2="1">
        <stop offset="0" stopColor="#8e8c82" />
        <stop offset="1" stopColor="#8f8d84" />
      </linearGradient>
      <linearGradient id="front" x1="0" y1="0" x2="1" y2="0">
        <stop offset="0" stopColor="#7d7e78" />
        <stop offset="1" stopColor="#70716c" />
      </linearGradient>
    </defs>
    <path d="M2207 840L2230 852L2246 1545L2140 1490Z" fill="url(#side)" stroke="#1c1c1c" strokeWidth="1" />
    <path
      d="M2208 1050C2213 1049 2216 1053 2217 1059L2224 1472C2224 1483 2219 1485 2214 1482L2171 1459C2165 1455 2162 1448 2163 1437L2203 1055C2204 1052 2205 1050 2208 1050Z"
      fill="#fff" stroke="#1c1c1c" strokeWidth="1"
    />
    <path d="M2208 1050C2204 1050 2203 1053 2203 1056L2163 1437C2162 1448 2166 1456 2172 1459L2174 1457C2170 1450 2170 1445 2171 1437L2213 1057C2212 1053 2211 1050 2208 1050Z" fill="#3a3a36" stroke="#1c1c1c" strokeWidth=".6" />
    <polygon points="2140,1490 2246,1545 2247,1553 2141,1498" fill="#83827a" stroke="#1c1c1c" strokeWidth="1" />
    <path d="M2162 1501L2163 1510M2180 1511L2180 1518M2208 1524L2208 1534M2226 1534L2226 1544" stroke="#1c1c1c" />
    <polygon points="2208,840 2230,852 2380,837 2358,825" fill="#bbbbb4" stroke="#1c1c1c" strokeWidth="1" />
    <ellipse cx="2255" cy="841" rx="12" ry="3.5" fill="#70716b" stroke="#333" strokeWidth=".5" />
    <ellipse cx="2292" cy="836" rx="12" ry="3.5" fill="#70716b" stroke="#333" strokeWidth=".5" />
    <ellipse cx="2328" cy="832" rx="12" ry="3.5" fill="#70716b" stroke="#333" strokeWidth=".5" />
    <polygon points="2230,852 2380,837 2393,1528 2393,1537 2248,1552" fill="url(#front)" stroke="#1c1c1c" strokeWidth="1" />
    <path d="M2247 1543L2393 1528" stroke="#1c1c1c" strokeWidth="1" />
    <path d="M2298 1538V1530M2307 1537V1530M2334 1534V1527M2343 1533V1526" stroke="#1c1c1c" />
    <path d="M2285 848L2287 856H2292L2293 846M2318 843V852M2328 842L2329 851" stroke="#1c1c1c" fill="none" />
    {leftTabs.map(([x, y], i) => (
      <g key={i}>
        <rect x={x} y={y} width={11} height={46} fill="#6a6b66" stroke="#1c1c1c" strokeWidth=".9" />
        <rect x={x + 1} y={y - 1} width={10} height={9} fill="#7d7e78" stroke="#1c1c1c" strokeWidth=".8" />
        <rect x={x + 1} y={y + 38} width={10} height={9} fill="#7d7e78" stroke="#1c1c1c" strokeWidth=".8" />
      </g>
    ))}
    {slotYs.map((y, i) => {
      const e = edgeX(y + 22);
      return (
        <g key={i}>
          <rect x={e - 3} y={y} width={6} height={45} fill="#fff" />
          <path d={`M${e + 2} ${y}H${e - 3}L${e - 6} ${y + 3}L${e - 4} ${y + 7}V${y + 38}L${e - 6} ${y + 42}L${e - 3} ${y + 45}H${e + 2}`} fill="none" stroke="#1c1c1c" strokeWidth="1" />
        </g>
      );
    })}
    {holeCols.map((c, ci) => [...c.s].map((t, ri) => (
      <Hole key={`${ci}-${ri}`} id={`h${ci}-${ri}`} x={c.x0 + c.dx * ri} y={c.y0 + c.dy * ri} t={t} />
    )))}
  </svg>
);

const ViewCube = () => (
  <svg width="80" height="94" viewBox="0 0 80 94">
    <ellipse cx="42" cy="74" rx="36" ry="8" fill="#ececec" />
    <polygon points="7,20 22,25 23,78 8,65" fill="#ececec" stroke="#999" strokeDasharray="5 2" />
    <polygon points="22,25 70,22 70,72 23,78" fill="#e8e8e8" stroke="#999" strokeDasharray="5 2" />
    <polygon points="7,20 22,25 70,22 43,17" fill="#f4f4f4" stroke="#999" strokeDasharray="5 2" />
    <polygon points="31,37 61,33 61,60 31,65" fill="#dcdcdc" />
    <text x="32" y="54" fontSize="11" fontWeight="700" fontFamily="Liberation Sans" fill="#8d93a0" transform="rotate(-5 46 52)">BACK</text>
    <path d="M71 23V80" stroke="#7be87b" strokeWidth="2.5" />
    <path d="M15 91L71 82" stroke="#e86a6a" strokeWidth="2.5" />
    <text x="66" y="15" fontSize="12" fontFamily="Liberation Sans" fontWeight="700" fill="#9af09a">Y</text>
    <text x="3" y="91" fontSize="12" fontFamily="Liberation Sans" fontWeight="700" fill="#f4a0a0">X</text>
  </svg>
);

const OrbitIcon = () => (
  <svg width="26" height="30" viewBox="0 0 26 30" fill="none" stroke="#666" strokeWidth="1.2">
    <ellipse cx="13" cy="15" rx="12" ry="6" /><ellipse cx="13" cy="15" rx="5" ry="13" />
    <path d="M11 15h4M13 13v4" stroke="#2b8fd8" />
  </svg>
);
const LookIcon = () => (
  <svg width="22" height="22" viewBox="0 0 22 22" fill="none" stroke="#666" strokeWidth="1.3">
    <rect x="2" y="6" width="18" height="14" rx="2" fill="#e5e5e5" /><path d="M6 3v6M11 3v6M16 3v6M2 13h18" />
  </svg>
);
const MonitorIcon = ({ c }) => (
  <svg width="26" height="22" viewBox="0 0 26 22">
    <rect x="1" y="1" width="24" height="15" fill={c} stroke="#555" /><rect x="8" y="16" width="10" height="4" fill="#888" />
  </svg>
);
const GridIcon = ({ c, lines }) => (
  <svg width="24" height="20" viewBox="0 0 24 20">
    <rect x="1" y="2" width="22" height="16" fill={c} stroke="#666" />
    {lines && <path d="M1 7H23M1 12H23M8 2V18M16 2V18" stroke="#dcecf8" />}
  </svg>
);
const CtrlIcon = ({ k }) => {
  const c = '#666';
  return (
    <svg width="22" height="24" viewBox="0 0 22 24">
      {k === 0 && <><rect x="3" y="3" width="2.5" height="18" fill={c} /><polygon points="19,3 19,21 6,12" fill={c} /></>}
      {k === 1 && <><polygon points="13,3 13,21 2,12" fill={c} /><rect x="15" y="7" width="3" height="10" fill={c} /></>}
      {k === 2 && <polygon points="3,0 20,12 3,24" fill={c} />}
      {k === 3 && <><rect x="3" y="7" width="3" height="10" fill={c} /><polygon points="8,3 8,21 19,12" fill={c} /></>}
      {k === 4 && <><rect x="16.5" y="3" width="2.5" height="18" fill={c} /><polygon points="3,3 3,21 16,12" fill={c} /></>}
    </svg>
  );
};

const groups = [
  { w: 393, c: 64, pl: 0, pr: 12, label: 'CREATE', icons: [<ISketch />, <IExtrude />, <IRevolve />, <IHole />, <IPattern />, <INewComp />] },
  { w: 468, c: 64.8, pl: 8, pr: 10, label: 'MODIFY', icons: [<IPress />, <IFillet />, <IShell />, <ICombine />, <IOffset />, <IMove />, <FxText>fx</FxText>] },
  { w: 146, c: 68, pl: 6, label: 'ASSEMBLE', icons: [<IAssemble />, <IJoint />] },
  { w: 157, c: 64, pl: 14, dim: true, label: 'CONFIGURE', icons: [<IConfig />, <IConfig table />] },
  { w: 156, c: 64, pl: 50, label: 'CONSTRUCT', icons: [<IPlane />] },
  { w: 211, c: 65, pl: 10, pr: 6, label: 'INSPECT', icons: [<IMeasure />, <IInterf />, <ISection />] },
  { w: 209, c: 67.5, pl: 7, pr: 4, label: 'INSERT', icons: [<ICanvas />, <IDerive />, <ISvgFile />] },
  { w: 118, c: 57, pl: 31, label: 'SELECT', last: true, icons: [<ISelect />] },
];
const tabs = [['SOLID', 850, true], ['SURFACE', 981], ['MESH', 1113], ['SHEET METAL', 1262], ['PLASTIC', 1425], ['UTILITIES', 1568]];

export default function App() {
  return (
    <Root>
      <Global />
      <TopStrip />
      <TopStripRight />
      <Sidebar>
        <Tabs><Tab $on>Data</Tab><Tab>People</Tab></Tabs>
        <Actions>
          <Upload>Upload</Upload>
          <NewFolder>New Folder</NewFolder>
          <GearWrap><FaCog /></GearWrap>
        </Actions>
        <Crumbs>
          <HomeWrap><FaHome /></HomeWrap>
          <Chevron $l={9} width="14" height="22" viewBox="0 0 14 22"><path d="M2 2L11 11L2 20" fill="none" stroke="#ccc" strokeWidth="4" /></Chevron>
          <Crumb>Welding_accesoiress</Crumb>
          <Chevron $l={6} width="14" height="22" viewBox="0 0 14 22"><path d="M2 2L11 11L2 20" fill="none" stroke="#ccc" strokeWidth="4" /></Chevron>
          <Crumb $b>squares_&amp;_blocks</Crumb>
          <GlobeWrap><FaGlobe /><GlobeEye><FaEye /></GlobeEye></GlobeWrap>
        </Crumbs>
        <Cards>
          {files.map(f => (
            <Card key={f.n} $sel={f.sel}>
              <ThumbBox>{f.t}</ThumbBox>
              <CardBody>
                <TitleRow><OrangeCube /><Title>{f.n}</Title></TitleRow>
                <DateText>{f.d}</DateText>
                <CardFoot>
                  <Pill><DocPencil /><PillText>Read-Only</PillText><PillCaret /></Pill>
                  <Version>{f.v}<VerCaret /></Version>
                </CardFoot>
              </CardBody>
            </Card>
          ))}
        </Cards>
      </Sidebar>
      <Main>
        <Toolbar>
          <DesignBtn>DESIGN<Caret $m={0} /></DesignBtn>
          <RibbonCol>
            <TabRow>
              {tabs.map(([t, x, on]) => <TabLabel key={t} $x={x - 798} $on={on}>{t}</TabLabel>)}
              <TabLine />
            </TabRow>
            <Ribbon>
              {groups.map(g => (
                <Group key={g.label} $w={g.w} $last={g.last}>
                  <IconRow $pl={g.pl}>
                    {g.icons.map((ic, i) => <IconCell key={i} $c={g.c} $dim={g.dim}>{ic}</IconCell>)}
                  </IconRow>
                  <GroupLabel $pr={g.pr}>{g.label}<Caret /></GroupLabel>
                </Group>
              ))}
            </Ribbon>
          </RibbonCol>
        </Toolbar>
        <Viewport>
          <Overlay $l={8} $t={7}>
            <Panel>
              <FaBackward color="#444" size={14} />
              <PanelTitle $m={17}>BROWSER</PanelTitle>
              <RoundBtn>–</RoundBtn>
            </Panel>
            <Tree>
              <TreeRow $ml={27}>
                <ArrowCell $w={27}><DownArrow /></ArrowCell>
                <RowPill $w={360}>
                  <RowIcon $w={37} $c="#999"><FaEye /></RowIcon>
                  <RootHL><Comp /><RootLabel>Square_parametirc_copy v2</RootLabel></RootHL>
                  <RootRadio />
                </RowPill>
              </TreeRow>
              {tree.map(r => <TreeItem key={r.l} r={r} />)}
            </Tree>
          </Overlay>
          <Banner>
            <BannerLock><FaLock /></BannerLock>
            <BannerB>Read-Only:</BannerB>
            <BannerT>Document is not editable</BannerT>
            <BannerLink>Make Editable</BannerLink>
          </Banner>
          <CubeBox><ViewCube /></CubeBox>
          <ModelBox><Model /></ModelBox>
          <Overlay $l={8} $t={1548}>
            <Panel $pl={37}>
              <PanelTitle>COMMENTS</PanelTitle>
              <RoundBtn>+</RoundBtn>
            </Panel>
          </Overlay>
          <NavBar>
            <NavItem $w={30}><OrbitIcon /></NavItem><NavCaret $w={18} />
            <NavItem $w={32}><LookIcon /></NavItem>
            <NavItem $w={40}><Hand size={22} /></NavItem>
            <NavItem $w={38}><Search size={22} /></NavItem>
            <NavItem $w={38}><ZoomIn size={22} /></NavItem><NavCaret $w={18} />
            <NavItem $w={34}><MonitorIcon c="#8fb3cf" /></NavItem><NavCaret $w={14} />
            <NavItem $w={32}><GridIcon c="#999" /></NavItem><NavCaret $w={14} />
            <NavItem $w={32}><GridIcon c="#6aa5d8" lines /></NavItem><NavCaret $w={14} />
          </NavBar>
        </Viewport>
        <Timeline>
          <Controls>
            {[0, 1, 2, 3, 4].map(k => <Ctrl key={k}><CtrlIcon k={k} /></Ctrl>)}
          </Controls>
          <Track>
            {seq.map((k, i) => {
              const C = tlMap[k];
              return <Step key={i}><C /><Tick /></Step>;
            })}
          </Track>
          <Playhead>
            <svg width="18" height="50" viewBox="0 0 18 50"><path d="M0 0H18V9L11 18V50H7V18L0 9Z" fill="#5e5e5e" /></svg>
          </Playhead>
          <TLGear><FaCog /></TLGear>
        </Timeline>
        <CmdHead><RoundBtnLeft>–</RoundBtnLeft>TEXT COMMANDS</CmdHead>
        <ConsoleWrap>
          <Console>
            <Watermark $t={18} $s={30}>Aktywuj system Windows</Watermark>
            <Watermark $t={58} $s={21.5}>Przejdź do ustawień, aby aktywować system Windows.</Watermark>
          </Console>
        </ConsoleWrap>
        <InputRow>
          <PyInput>Type Python Commands here - Type 'import neu_dev; neu_dev.list_functions()' for help</PyInput>
          <Radios>
            <Radio $m={3} /><RadioText>Txt</RadioText>
            <Radio $m={9} $on /><RadioText>Py</RadioText>
            <Radio $m={10} /><RadioText>Js</RadioText>
          </Radios>
        </InputRow>
      </Main>
    </Root>
  );
}
